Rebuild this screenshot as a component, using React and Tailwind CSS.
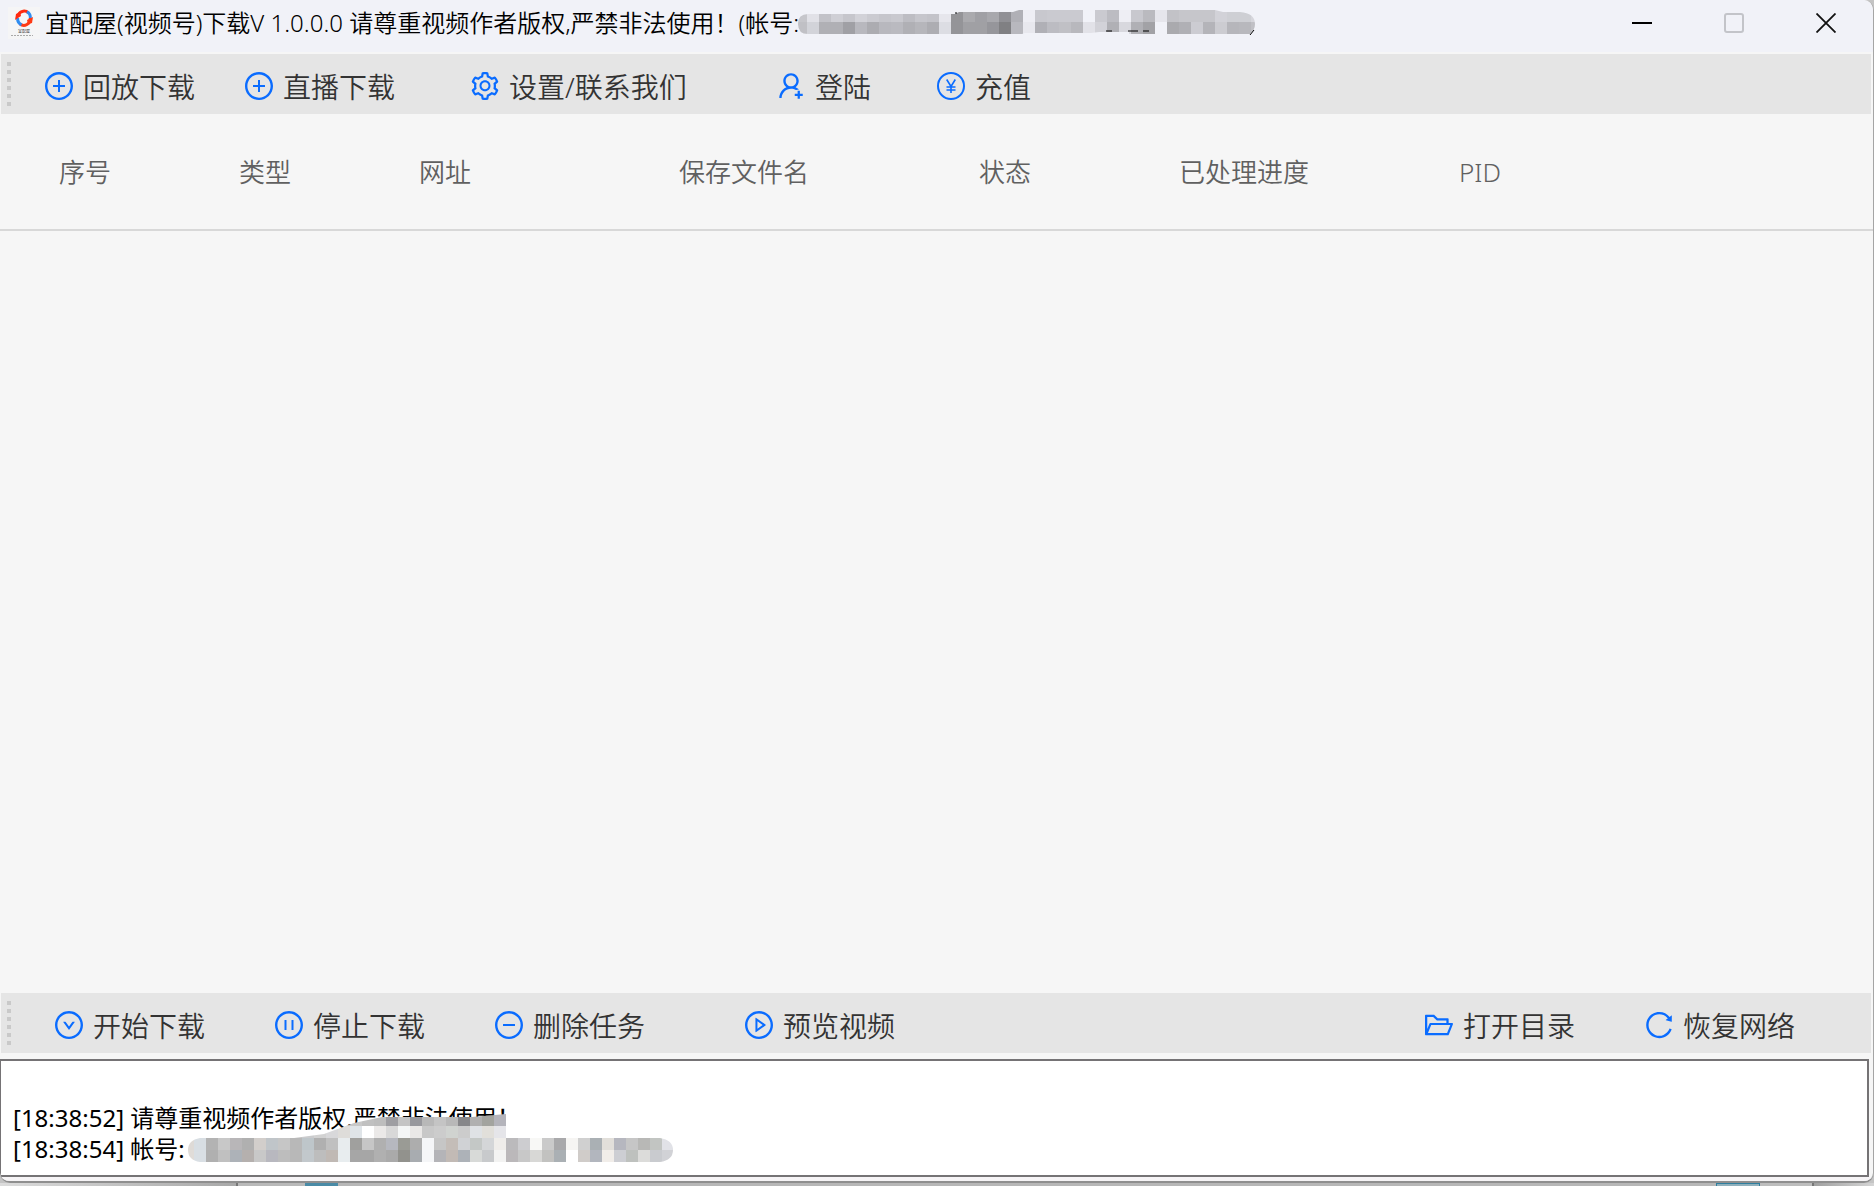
import {
  AiOutlineDownCircle,
  AiOutlineFolderOpen,
  AiOutlineMinusCircle,
  AiOutlinePauseCircle,
  AiOutlinePlayCircle,
  AiOutlinePlusCircle,
  AiOutlineReload,
  AiOutlineSetting,
  AiOutlineUserAdd,
} from 'react-icons/ai';

const topTools = [
  { label: '回放下载', icon: AiOutlinePlusCircle, className: 'w-[200px]' },
  { label: '直播下载', icon: AiOutlinePlusCircle, className: 'w-[226px]' },
  { label: '设置/联系我们', icon: AiOutlineSetting, className: 'w-[306px]' },
  { label: '登陆', icon: AiOutlineUserAdd, className: 'w-[160px]' },
  { label: '充值', icon: YuanIcon, className: 'w-[120px]' },
];

const bottomTools = [
  { label: '开始下载', icon: AiOutlineDownCircle, className: 'w-[220px]' },
  { label: '停止下载', icon: AiOutlinePauseCircle, className: 'w-[220px]' },
  { label: '删除任务', icon: AiOutlineMinusCircle, className: 'w-[250px]' },
  { label: '预览视频', icon: AiOutlinePlayCircle, className: 'w-[200px]' },
];

const rightTools = [
  { label: '打开目录', icon: AiOutlineFolderOpen, className: 'w-[220px]' },
  { label: '恢复网络', icon: AiOutlineReload, className: 'w-[228px]' },
];

const columns = [
  { title: '序号', width: 'w-[180px]' },
  { title: '类型', width: 'w-[180px]' },
  { title: '网址', width: 'w-[260px]' },
  { title: '保存文件名', width: 'w-[300px]' },
  { title: '状态', width: 'w-[200px]' },
  { title: '已处理进度', width: 'w-[280px]' },
  { title: 'PID', width: '' },
];

const logText = '\n[18:38:52] 请尊重视频作者版权,严禁非法使用！\n[18:38:54] 帐号:';

// Mosaic cells are 12px wide, one hex colour per cell
const titleMosaic = [
  { y: 10, x: 0, colors: 'c6c6cb e1e1e7 c2c2c8 cfcfd5 c6c6cc d2d2d8 cbcbd1 c6c6cc c9c9cf bdbdc3 c6c6cc c3c3c9 e6e6ec 949498 aaaaae a0a0a5 a8a8ad 909095 b0b0b6 eeeef4 c8c8ce cacad0 cacad0 cacad0 f1f2f8 cacad0 bcbcc2 eeeef4 c8c8ce bababf e6e6ec c2c2c7 c6c6cb c6c6cb c6c6cb d2d2d8 cecfd4 cecfd4 d6d6dc' },
  { y: 22, x: 0, colors: 'c0c0c5 d2d3d9 b0b0b5 b0b0b5 a0a0a5 b8b8be acacb1 b8b8be babac0 b0b0b5 b6b6bb adadb2 dcdde3 949498 a0a0a4 a0a0a4 96969b 808083 b8b8be e8e8ee b0b0b6 bcbcc2 c0c0c5 b8b8bd e2e2e8 d2d2d8 b0b0b5 d8d8de b0b0b5 a2a2a6 f1f2f8 aaaaae b0b0b5 ccccd2 b4b4b9 ccccd1 b6b6bb b8b8bd c0c0c5' },
];

const logMosaic = [
  { y: 0, x: 108, colors: 'c8c8c8 c8c8c8 c8c8c8 c8c8c8 c4c4c4 c8c8c8 c0c0c0 bdbdbd 9e9ea2 c4c4c4 98989d b8b8b8 c4c4c4 b8b8b8 87878a b0b0b0 a3a49f b4b4bb' },
  { y: 12, x: 108, colors: 'c6c6c6 cacbcd d2d2d2 d8d8da dedcd9 dfe4e8 ffffff ebe9e8 d8d8d8 f4f6f6 eae8e7 c8c8c8 cccccc d0d3d0 cccccc dfe2e5 e1dfda e5e5e9' },
  { y: 24, x: 0, colors: 'dedad6 d8dee3 b3b3b3 c8c8c8 b8b6b8 b0b0b0 d2cecb c0c5c9 c6c6c6 b8b8b8 bec6ca b0b0b0 c0c0c0 e8ecee a0a09e c6c6c6 b0b0b0 b6b8bf 9a9b95 adadad f5f6f8 c6c6c6 c4bdb8 d0d2d5 c4c8c6 d4d6d8 efedea bbbabc cdcdd0 f8f8f6 cacaca a9a9ab f6f5f3 d0d0d0 aab0b4 e2dfda b6b7bf c6c6c6 b8b8b6 c2c5c2 e1e2e7' },
  { y: 36, x: 0, colors: 'e0dcd8 d9dfe4 b0b0b0 c0c0c0 adb2b8 b5b0ae c8c8c8 b8b8bf bdbdbd b8b8b8 c2c8cc bdbdbd c0b9b4 e8edef a6a6a6 a6a6a6 b0b0b0 aaaaaa 92928d a8acb0 f5f6f8 b4b4b8 c2bab5 adb2b8 d8dad8 c8cacc f3f3f2 bbb8ba c8c8c8 d8d8d6 c2c2c0 aab0b4 ffffff d0ccc9 b2b6be f1ede9 cdced3 bec1be dcdcda c9cbcf d1d2d6' },
];

function Mosaic({ id, rows, outline, width, height, className, children }) {
  return (
    <svg width={width} height={height} viewBox={`0 0 ${width} ${height}`} className={className} aria-hidden="true">
      <clipPath id={id}>
        <path d={outline} />
      </clipPath>
      <g clipPath={`url(#${id})`} shapeRendering="crispEdges">
        {rows.map((row) =>
          row.colors.split(' ').map((color, i) => (
            <rect key={`${row.y}-${i}`} x={row.x + i * 12} y={row.y} width="12" height="12" fill={`#${color}`} />
          ))
        )}
      </g>
      {children}
    </svg>
  );
}

function YuanIcon({ className }) {
  return (
    <svg viewBox="0 0 32 32" className={className} fill="none" stroke="currentColor" strokeWidth="2">
      <circle cx="16" cy="16" r="13" />
      <path d="M11.700 9.500l4.300 7 4.300-7M16 16v7M11.500 17h9M11.500 20h9" strokeWidth="1.600" />
    </svg>
  );
}

function AppLogo() {
  return (
    <svg viewBox="0 0 32 32" className="size-8 shrink-0" aria-hidden="true">
      <rect width="32" height="32" fill="#f5f5f6" />
      <g fill="none" strokeWidth="3">
        <path d="M10.500 7.500A6.500 7 0 0 1 20.500 6" stroke="#ff2a10" />
        <path d="M19 4.800A6.500 7 0 0 1 22.300 12" stroke="#2f8cf0" />
        <path d="M22.300 11A6.500 7 0 0 1 12 17" stroke="#ff3a14" />
        <path d="M9.600 11A6.500 7 0 0 0 13.500 17.800" stroke="#2f8cf0" />
      </g>
      <path d="M7 13l1-6 4-2 1 4z" fill="#ff2a10" />
      <path d="M25 10l-1 6-4 1-1-4z" fill="#ff3a14" />
      <text x="16" y="26" fontSize="4" textAnchor="middle" fill="#333">宜配屋</text>
      <path d="M3 28.500h22" stroke="#aaa" strokeDasharray="2 1" />
    </svg>
  );
}

function WindowButtons() {
  return (
    <div className="ml-auto mr-px flex h-[46px] shrink-0 self-start">
      <button type="button" aria-label="最小化" className="flex w-[92px] items-center justify-center">
        <span className="h-[2px] w-5 bg-black" />
      </button>
      <button type="button" aria-label="最大化" disabled className="flex w-[92px] items-center justify-center">
        <span className="size-5 rounded-[3px] border-2 border-[#c3c4c9]" />
      </button>
      <button type="button" aria-label="关闭" className="flex w-[92px] items-center justify-center">
        <svg viewBox="0 0 20 20" className="size-5" stroke="#111" strokeWidth="1.800">
          <path d="M0.500 0.500l19 19M19.500 0.500l-19 19" />
        </svg>
      </button>
    </div>
  );
}

function TitleBar() {
  return (
    <header className="flex h-[52px] shrink-0 bg-[#f1f2f8] pl-2">
      <div className="flex h-[46px] items-center">
        <AppLogo />
        <h1 className="ml-[5px] whitespace-nowrap text-[24px] leading-8">
          宜配屋(视频号)下载V 1.0.0.0 请尊重视频作者版权,严禁非法使用！(帐号:
        </h1>
      </div>
      <Mosaic
        id="title-mosaic"
        rows={titleMosaic}
        width={468}
        height={46}
        className="-ml-1 shrink-0"
        outline="M13 14H160L164 12H218L224 10H420L428 12H445Q460 13 460 24Q460 30 455 34H334V32H304L296 33H230L224 35L216 34H13Q3 34 3 24Q3 14 13 14Z"
      >
        <path d="M311 31h6M333 31h10M348 31h6M455 35l4-5M160 13h2" stroke="#000" strokeWidth="1" />
      </Mosaic>
      <WindowButtons />
    </header>
  );
}

function ToolButton({ label, icon: Icon, className }) {
  return (
    <button type="button" className={`flex shrink-0 items-center gap-2 ${className}`}>
      <Icon className="size-8 shrink-0 text-[#0a6cff]" />
      <span className="whitespace-nowrap pt-[2px] text-[28px] leading-10">{label}</span>
    </button>
  );
}

function Grip() {
  return (
    <div className="flex w-[6px] shrink-0 flex-col justify-center gap-1 pb-1">
      {[...Array(6)].map((_, i) => (
        <span key={i} className="size-1 bg-[#c9c9c9]" />
      ))}
    </div>
  );
}

function Toolbar({ children, className = '' }) {
  return (
    <div role="toolbar" className={`ml-px mr-[2px] flex h-[60px] shrink-0 bg-[#e5e5e5] pl-[6px] pt-1 text-[#333] ${className}`}>
      <Grip />
      {children}
    </div>
  );
}

function TaskTable() {
  return (
    <div className="min-h-0 flex-1">
      <table className="w-full table-fixed border-collapse">
        <thead>
          <tr className="h-[116px] border-b-2 border-[#d8d8d8]">
            {columns.map((col) => (
              <th key={col.title} scope="col" className={`whitespace-nowrap pl-[59px] text-left text-[26px] font-[350] leading-9 text-[#606060] ${col.width}`}>
                {col.title}
              </th>
            ))}
          </tr>
        </thead>
        <tbody />
      </table>
    </div>
  );
}

function LogPanel() {
  return (
    <div className="relative mr-1 mt-[6px] h-[118px] shrink-0">
      <textarea
        readOnly
        aria-label="日志"
        value={logText}
        className="block size-full resize-none overflow-hidden border-2 border-l border-[#757375] bg-white px-3 pt-[10px] text-[24px] font-normal leading-[31px] text-black outline-none"
      />
      <Mosaic
        id="log-mosaic"
        rows={logMosaic}
        width={500}
        height={50}
        className="absolute left-[182px] top-[55px]"
        outline="M18 24H112L142 20L172 9L200 3H290L324 0V24H478Q491 26 491 36Q491 46 478 48H18Q6 46 6 36Q6 26 18 24Z"
      />
    </div>
  );
}

// Sliver of the desktop that shows below the window
function DesktopStrip() {
  return (
    <div className="flex h-[3px] shrink-0">
      <div className="w-[236px] bg-linear-to-r from-[#dcdcdc] to-[#a8a8a8]" />
      <div className="w-[2px] bg-[#777]" />
      <div className="w-[67px] bg-[#b9b9b9]" />
      <div className="w-[33px] bg-[#4a8ba6]" />
      <div className="flex-1 bg-[#b7b7b7]" />
      <div className="w-11 border-x border-t border-[#2f7f9f] bg-[#8fb0bc]" />
      <div className="w-[52px] bg-[#bdbdbd]" />
      <div className="w-[2px] bg-[#777]" />
      <div className="w-[60px] bg-linear-to-r from-[#a0a0a0] to-[#d5d5d5]" />
    </div>
  );
}

export default function App() {
  return (
    <div className="flex h-screen flex-col overflow-hidden bg-[#c4c4c4] font-['Noto_Sans','Noto_Sans_CJK_SC',sans-serif] font-[350] text-black">
      <main className="flex min-h-0 flex-1 flex-col overflow-hidden rounded-b-[10px] rounded-tr-[10px] border-b-2 border-r border-b-[#8f8f8f] border-r-[#a5a5a5] bg-[#f6f6f6]">
        <TitleBar />
        <Toolbar className="mt-[2px]">
          <div className="flex pl-[30px]">
            {topTools.map((tool) => (
              <ToolButton key={tool.label} {...tool} />
            ))}
          </div>
        </Toolbar>
        <TaskTable />
        <Toolbar>
          <div className="flex pl-10">
            {bottomTools.map((tool) => (
              <ToolButton key={tool.label} {...tool} />
            ))}
          </div>
          <div className="ml-auto flex">
            {rightTools.map((tool) => (
              <ToolButton key={tool.label} {...tool} />
            ))}
          </div>
        </Toolbar>
        <LogPanel />
        <div className="h-1 shrink-0 bg-[#f6f4f6]" />
      </main>
      <DesktopStrip />
    </div>
  );
}
